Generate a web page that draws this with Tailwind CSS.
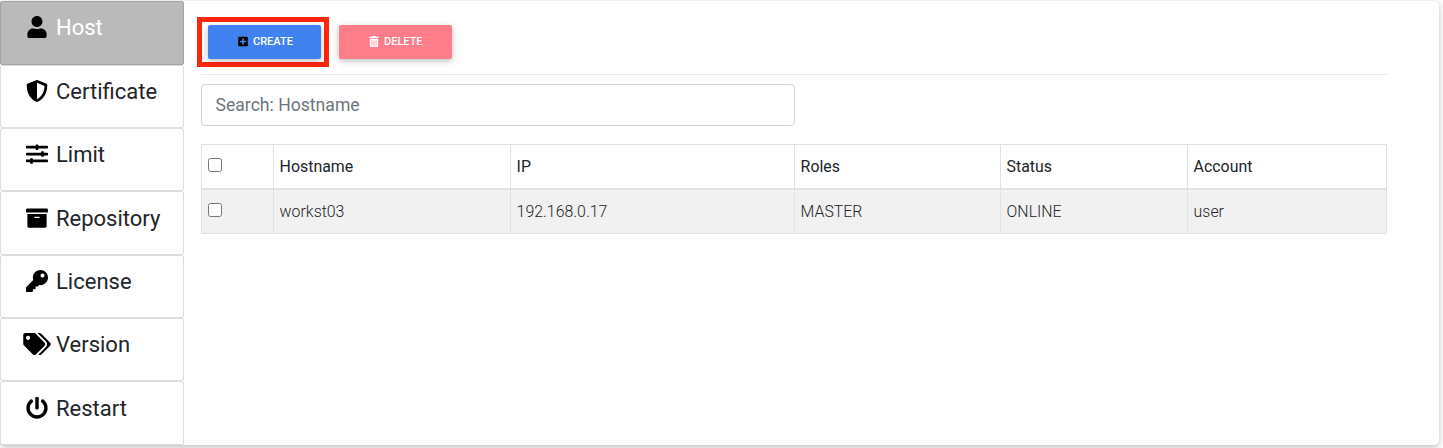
<!DOCTYPE html>
<html lang="en">
<head>
<meta charset="utf-8">
<title>Host</title>
<script src="https://cdn.jsdelivr.net/npm/@tailwindcss/browser@4"></script>
</head>
<body class="h-[448px] overflow-hidden bg-white pt-px font-[Roboto,sans-serif] text-[#212529]">
<div class="flex h-[444px] w-[1439px] rounded-[5px] bg-white shadow-[0_2px_5px_rgba(0,0,0,0.16),0_2px_10px_rgba(0,0,0,0.12)]">
  <nav class="flex h-[444px] w-[184px] shrink-0 flex-col text-[22px] leading-[33px]">
    <a class="flex h-[64px] items-start rounded-[2px] border border-[#a3a3a3] bg-[#bababa] pt-[9px] pl-[21px] text-white">
      <span class="flex h-[31.5px] w-[30px] items-center justify-center"><svg class="h-[22px] w-[20px] fill-black" viewBox="0 0 448 512"><path d="M224 256c70.7 0 128-57.3 128-128S294.7 0 224 0 96 57.3 96 128s57.3 128 128 128zm89.6 32h-16.7c-22.2 10.2-46.9 16-72.9 16s-50.6-5.8-72.9-16h-16.7C60.2 288 0 348.2 0 422.4V464c0 26.5 21.5 48 48 48h352c26.5 0 48-21.5 48-48v-41.6c0-74.2-60.2-134.4-134.4-134.4z"/></svg></span>
      <span class="ml-1">Host</span></a>
    <a class="flex h-[63px] items-start rounded-[2px] border border-[#dedede] pt-[9px] pl-[21px]">
      <span class="flex h-[31.5px] w-[30px] items-center justify-center"><svg class="size-[22px] fill-black" viewBox="0 0 512 512"><path d="M466.5 83.7l-192-80a48.15 48.15 0 0 0-36.9 0l-192 80C27.7 91.1 16 108.6 16 128c0 198.5 114.5 335.7 221.5 380.3 11.8 4.9 25.1 4.9 36.9 0C360.1 472.6 496 349.3 496 128c0-19.4-11.7-36.9-29.5-44.3zM256.1 446.3l-.1-381 175.9 73.3c-3.3 151.4-82.1 261.1-175.8 307.7z"/></svg></span>
      <span class="ml-1">Certificate</span></a>
    <a class="flex h-[63px] items-start rounded-[2px] border border-[#dedede] pt-[9px] pl-[21px]">
      <span class="flex h-[31.5px] w-[30px] items-center justify-center"><svg class="size-[22px] fill-black" viewBox="0 0 512 512"><path d="M496 384H160v-16c0-8.8-7.2-16-16-16h-32c-8.8 0-16 7.2-16 16v16H16c-8.8 0-16 7.2-16 16v32c0 8.8 7.2 16 16 16h80v16c0 8.8 7.2 16 16 16h32c8.8 0 16-7.2 16-16v-16h336c8.8 0 16-7.2 16-16v-32c0-8.8-7.2-16-16-16zm0-160h-80v-16c0-8.8-7.2-16-16-16h-32c-8.8 0-16 7.2-16 16v16H16c-8.8 0-16 7.2-16 16v32c0 8.8 7.2 16 16 16h336v16c0 8.8 7.2 16 16 16h32c8.8 0 16-7.2 16-16v-16h80c8.8 0 16-7.2 16-16v-32c0-8.8-7.2-16-16-16zm0-160H288V48c0-8.8-7.2-16-16-16h-32c-8.8 0-16 7.2-16 16v16H16C7.2 64 0 71.2 0 80v32c0 8.8 7.2 16 16 16h208v16c0 8.8 7.2 16 16 16h32c8.8 0 16-7.2 16-16v-16h208c8.8 0 16-7.2 16-16V80c0-8.8-7.2-16-16-16z"/></svg></span>
      <span class="ml-1">Limit</span></a>
    <a class="flex h-[64px] items-start rounded-[2px] border border-[#dedede] pt-[9px] pl-[21px]">
      <span class="flex h-[33px] w-[30px] items-center justify-center"><svg class="size-[22px] fill-black" viewBox="0 0 512 512"><path d="M32 448c0 17.7 14.3 32 32 32h384c17.7 0 32-14.3 32-32V160H32v288zm160-212c0-6.6 5.4-12 12-12h104c6.6 0 12 5.4 12 12v8c0 6.6-5.4 12-12 12H204c-6.6 0-12-5.4-12-12v-8zM480 32H32C14.3 32 0 46.3 0 64v48c0 8.8 7.2 16 16 16h480c8.8 0 16-7.2 16-16V64c0-17.7-14.3-32-32-32z"/></svg></span>
      <span class="mt-px ml-1">Repository</span></a>
    <a class="flex h-[63px] items-start rounded-[2px] border border-[#dedede] pt-[9px] pl-[21px]">
      <span class="flex h-[31.5px] w-[30px] items-center justify-center"><svg class="size-[22px] fill-black" viewBox="0 0 512 512"><path d="M512 176.001C512 273.203 433.202 352 336 352c-11.22 0-22.19-1.062-32.827-3.069l-24.012 27.014A23.999 23.999 0 0 1 261.223 384H224v40c0 13.255-10.745 24-24 24h-40v40c0 13.255-10.745 24-24 24H24c-13.255 0-24-10.745-24-24v-78.059c0-6.365 2.529-12.47 7.029-16.971l161.802-161.802C163.108 213.814 160 195.271 160 176 160 78.798 238.797.001 335.999 0 433.488-.001 512 78.511 512 176.001zM336 128c0 26.51 21.49 48 48 48s48-21.49 48-48-21.49-48-48-48-48 21.49-48 48z"/></svg></span>
      <span class="ml-1">License</span></a>
    <a class="flex h-[63px] items-start rounded-[2px] border border-[#dedede] pt-[9px] pl-[21px]">
      <span class="flex h-[31.5px] w-[30px] items-center justify-center"><svg class="h-[22px] w-[28px] fill-black" viewBox="0 0 640 512"><path d="M497.941 225.941L286.059 14.059A48 48 0 0 0 252.118 0H48C21.49 0 0 21.49 0 48v204.118a48 48 0 0 0 14.059 33.941l211.882 211.882c18.744 18.745 49.136 18.746 67.882 0l204.118-204.118c18.745-18.745 18.745-49.137 0-67.882zM112 160c-26.51 0-48-21.49-48-48s21.49-48 48-48 48 21.49 48 48-21.49 48-48 48zm513.941 133.823L421.823 497.941c-18.745 18.745-49.137 18.745-67.882 0l-.36-.36L527.64 323.522c16.999-16.999 26.36-39.6 26.36-63.64s-9.362-46.641-26.36-63.64L331.397 0h48.721a48 48 0 0 1 33.941 14.059l211.882 211.882c18.745 18.745 18.745 49.137 0 67.882z"/></svg></span>
      <span class="ml-1">Version</span></a>
    <a class="flex h-[64px] items-start rounded-[2px] border border-[#dedede] pt-[9px] pl-[21px]">
      <span class="flex h-[33px] w-[30px] items-center justify-center"><svg class="size-[22px] fill-black" viewBox="0 0 512 512"><path d="M400 54.1c63 45 104 118.6 104 201.9 0 136.8-110.8 247.7-247.5 248C120 504.3 8.2 393 8 256.4 7.9 173.1 48.9 99.3 111.8 54.2c11.7-8.3 28-4.8 35 7.7L162.6 90c5.9 10.5 3.1 23.8-6.6 31-41.5 30.8-68 79.6-68 134.9-.1 92.3 74.5 168.1 168 168.1 91.6 0 168.6-74.2 168-169.1-.3-51.8-24.7-101.8-68.1-134-9.7-7.2-12.4-20.5-6.5-30.9l15.8-28.1c7-12.4 23.2-16.1 34.8-7.8zM296 264V24c0-13.3-10.7-24-24-24h-32c-13.3 0-24 10.7-24 24v240c0 13.3 10.7 24 24 24h32c13.3 0 24-10.7 24-24z"/></svg></span>
      <span class="mt-px ml-1">Restart</span></a>
  </nav>
  <main class="flex w-[1205px] flex-col pt-4 pl-[17px]">
    <div class="-ml-1 flex items-center gap-[10px]">
      <div class="h-[50px] w-[132px] border-5 border-[#ff260e] pt-[3px] pl-[6px]">
        <button class="flex h-[34px] w-[113px] items-center gap-[5px] rounded-[2px] bg-[#4083f0] pb-px pl-[30px] text-[11px] font-medium text-white shadow-[0_2px_5px_rgba(0,0,0,0.16),0_2px_10px_rgba(0,0,0,0.12)]"><svg class="h-[11px] w-[10px] fill-black" viewBox="0 0 448 512"><path d="M400 32H48C21.5 32 0 53.5 0 80v352c0 26.5 21.5 48 48 48h352c26.5 0 48-21.5 48-48V80c0-26.5-21.5-48-48-48zm-32 252c0 6.6-5.4 12-12 12h-92v92c0 6.6-5.4 12-12 12h-56c-6.6 0-12-5.4-12-12v-92H92c-6.6 0-12-5.4-12-12v-56c0-6.6 5.4-12 12-12h92v-92c0-6.6 5.4-12 12-12h56c6.6 0 12 5.4 12 12v92h92c6.6 0 12 5.4 12 12v56z"/></svg><span class="pt-px">CREATE</span></button>
      </div>
      <button class="flex h-[34px] w-[113px] items-center gap-[5px] rounded-[2px] bg-[#ff7d89] pb-px pl-[30px] text-[11px] font-medium text-white shadow-[0_2px_5px_rgba(0,0,0,0.16),0_2px_10px_rgba(0,0,0,0.12)]"><svg class="h-[11px] w-[10px] fill-white" viewBox="0 0 448 512"><path d="M32 464a48 48 0 0 0 48 48h288a48 48 0 0 0 48-48V128H32zm272-256a16 16 0 0 1 32 0v224a16 16 0 0 1-32 0zm-96 0a16 16 0 0 1 32 0v224a16 16 0 0 1-32 0zm-96 0a16 16 0 0 1 32 0v224a16 16 0 0 1-32 0zM432 32H312l-9.4-18.7A24 24 0 0 0 281.1 0H166.8a23.72 23.72 0 0 0-21.4 13.3L136 32H16A16 16 0 0 0 0 48v32a16 16 0 0 0 16 16h416a16 16 0 0 0 16-16V48a16 16 0 0 0-16-16z"/></svg><span class="pt-px">DELETE</span></button>
    </div>
    <hr class="mt-[7px] w-[1187px] border-[#e8eaec]">
    <input type="text" placeholder="Search: Hostname" class="mt-[9px] h-[42px] w-[594px] rounded-[4px] border border-[#ced4da] px-[13.5px] text-[17.6px] placeholder:text-[#6c757d]">
    <div class="mt-[18px] w-[1186px] border-t border-l border-[#dee2e6] text-[15.9px]">
      <div class="grid h-[45px] grid-cols-[72px_237px_284px_206px_187px_199px] border-b-2 border-[#dee2e6] leading-[43px] *:border-r *:border-[#dee2e6] *:pl-[5.6px]">
        <div class="flex pt-[13px]"><input type="checkbox" class="m-0 size-[14px]"></div><div>Hostname</div><div>IP</div><div>Roles</div><div>Status</div><div>Account</div>
      </div>
      <div class="grid h-[44px] grid-cols-[72px_237px_284px_206px_187px_199px] border-b border-[#dee2e6] bg-[#f1f1f1] leading-[43px] font-light *:border-r *:border-[#dee2e6] *:pl-[5.6px]">
        <div class="flex pt-[13px]"><input type="checkbox" class="m-0 size-[14px]"></div><div>workst03</div><div>192.168.0.17</div><div>MASTER</div><div>ONLINE</div><div>user</div>
      </div>
    </div>
  </main>
</div>
</body>
</html>
